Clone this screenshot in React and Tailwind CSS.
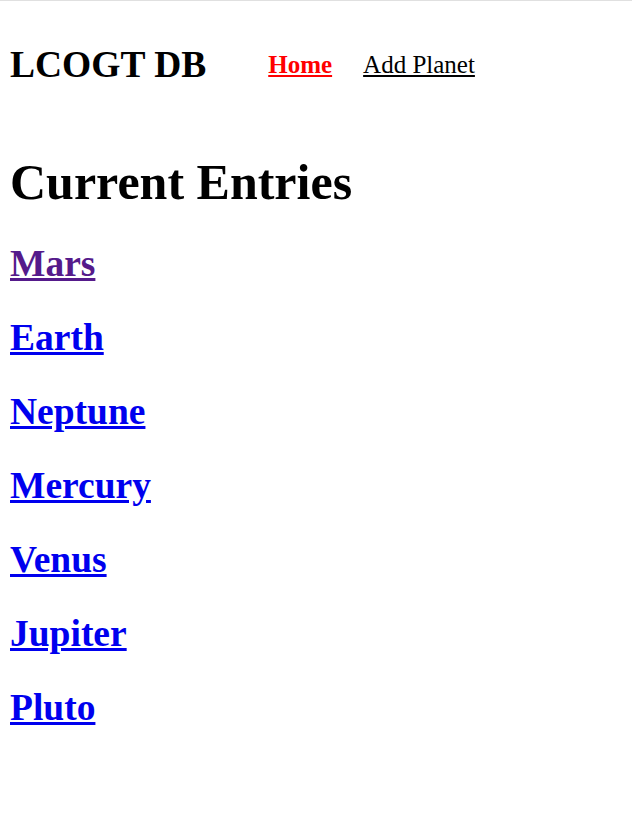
export default function App() {
  const planets = ["Mars", "Earth", "Neptune", "Mercury", "Venus", "Jupiter", "Pluto"];

  return (
    <div className="min-h-screen bg-white border-t border-[#e0e0e0] px-[10px] font-['Liberation_Serif',serif] text-black">
      <div className="flex items-center pt-[42px]">
        <div className="text-[37.5px] font-bold leading-[1.15]">LCOGT DB</div>
        <nav className="flex items-center gap-[31px] ml-[62px] text-[25px]">
          <a href="#" className="font-bold text-[#ff0000] underline">
            Home
          </a>
          <a href="#" className="text-black underline">
            Add Planet
          </a>
        </nav>
      </div>
      <h1 className="mt-[68px] text-[50px] font-bold leading-[1.15]">Current Entries</h1>
      <div className="flex flex-col pt-[10px]">
        {planets.map((p, i) => (
          <h2 key={p} className="mt-[20px] mb-[11px] text-[37.5px] font-bold leading-[1.15]">
            <a href="#" className={`underline ${i === 0 ? "text-[#551a8b]" : "text-[#0000ee]"}`}>
              {p}
            </a>
          </h2>
        ))}
      </div>
    </div>
  );
}
